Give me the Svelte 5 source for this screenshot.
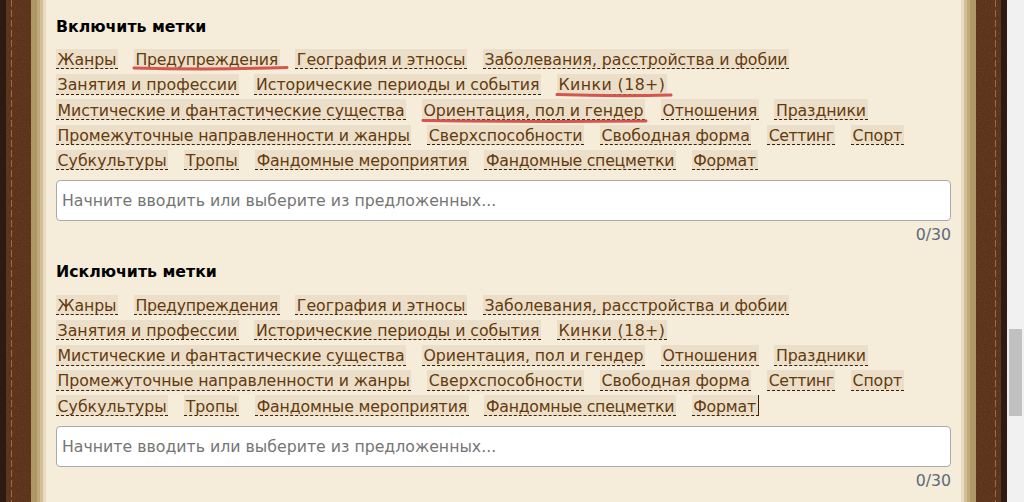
<script>
    const rows = [
        [["Жанры", -0.5], ["Предупреждения", -4], ["География и этносы", -0.5], ["Заболевания, расстройства и фобии", -1]],
        [["Занятия и профессии", 0], ["Исторические периоды и события", -1], ["Кинки (18+)", 5]],
        [["Мистические и фантастические существа", -4], ["Ориентация, пол и гендер", -1], ["Отношения", -1], ["Праздники", -1]],
        [["Промежуточные направленности и жанры", -4], ["Сверхспособности", 0], ["Свободная форма", -1], ["Сеттинг", -3], ["Спорт", -0.5]],
        [["Субкультуры", 0], ["Тропы", 0], ["Фандомные мероприятия", -3], ["Фандомные спецметки", -5], ["Формат", -1]]
    ];

    const sections = [
        { title: "Включить метки", caret: false },
        { title: "Исключить метки", caret: true }
    ];
</script>

{#snippet leather(side)}
    <svg class="leather" width="31" height="502" viewBox="0 0 31 502">
        <rect width="31" height="502" fill="#5a3119" />
        <rect width="31" height="502" filter="url(#grain-{side})" opacity="0.6" />
        {#if side === "left"}
            <rect width="6" height="502" fill="#2e1a10" />
            <line x1="11.5" y1="0" x2="11.5" y2="502" class="stitch" />
        {:else}
            <rect x="25" width="6" height="502" fill="#2e1a10" />
            <line x1="19.5" y1="0" x2="19.5" y2="502" class="stitch" />
        {/if}
        <filter id="grain-{side}">
            <feTurbulence type="fractalNoise" baseFrequency="0.7" numOctaves="2" seed="4" />
            <feColorMatrix values="0 0 0 0 0.16  0 0 0 0 0.07  0 0 0 0 0.03  0 0 0 1.6 -0.5" />
        </filter>
    </svg>
{/snippet}

<div class="frame">
    {@render leather("left")}
    <div class="trim"></div>
    <main class="paper">
        {#each sections as section}
            <section class="block">
                <h3>{section.title}</h3>
                <div class="tags">
                    {#each rows as row}
                        <div class="tag-row">
                            {#each row as [tag, tweak]}
                                <span
                                    class="tag"
                                    class:caret={section.caret && tag === "Формат"}
                                    style="letter-spacing: {tweak / tag.length}px"
                                >{tag}</span>
                            {/each}
                        </div>
                    {/each}
                </div>
                <input type="text" placeholder="Начните вводить или выберите из предложенных..." />
                <div class="counter">0/30</div>
            </section>
        {/each}
    </main>
    <div class="trim right"></div>
    {@render leather("right")}
    <div class="scrollbar"><div class="thumb"></div></div>

    <!-- red marks drawn by hand over the first block -->
    <svg class="marks" width="1024" height="502" viewBox="0 0 1024 502">
        <path d="M134 68 Q210 70 287 67.5" />
        <path d="M557 94.5 Q615 96.5 671 95" />
        <path d="M423 120.5 Q530 122 646 121" />
    </svg>
</div>

<style>
    :global(body) {
        margin: 0;
        overflow: hidden;
        background: #f1f1f1;
    }

    .frame {
        position: relative;
        display: flex;
        width: 1024px;
        height: 502px;
        overflow: hidden;
        font-family: "DejaVu Sans", sans-serif;
    }

    .leather {
        display: block;
        flex: none;
    }

    .stitch {
        stroke: #8f6f50;
        stroke-width: 1;
        stroke-dasharray: 7 3;
    }

    .trim {
        flex: none;
        width: 15px;
        background: linear-gradient(90deg, #ae9866 0 6px, #c0aa7c 6px 9px, #d2bf97 9px 12px, #e8dcc0 12px 15px);
    }

    .trim.right {
        background: linear-gradient(270deg, #ae9866 0 6px, #c0aa7c 6px 9px, #d2bf97 9px 12px, #e8dcc0 12px 15px);
    }

    .paper {
        flex: none;
        box-sizing: border-box;
        width: 915px;
        padding: 0 10px;
        background: #f5ecd9;
    }

    .block {
        height: 245.7px;
        padding-top: 17.6px;
        box-sizing: border-box;
    }

    h3 {
        margin: 0 0 13.4px;
        font-size: 15.75px;
        line-height: 18px;
        font-weight: bold;
        color: #000;
    }

    .tag-row {
        display: flex;
        align-items: flex-start;
        gap: 15.75px;
        height: 25.2px;
    }

    .tag {
        padding: 2.2px 1.6px 0;
        font-size: 15.75px;
        line-height: 17.3px;
        color: #633a0e;
        background: #ecdfc9;
        border-bottom: 1px dashed #3a2208;
    }

    .caret {
        border-right: 1px solid #3a2208;
    }

    input {
        display: block;
        box-sizing: border-box;
        width: 895px;
        height: 41px;
        margin-top: 5.2px;
        padding: 0 5px;
        border: 1px solid #aaa;
        border-radius: 4px;
        background: #fff;
        font: 15.75px "DejaVu Sans", sans-serif;
    }

    .counter {
        margin-top: 4px;
        font-size: 15.75px;
        line-height: 20px;
        text-align: right;
        color: #5b6b7b;
    }

    .scrollbar {
        flex: none;
        width: 17px;
        padding: 329px 2px 0;
        box-sizing: border-box;
        background: #f1f1f1;
    }

    .thumb {
        height: 87px;
        background: #c1c1c1;
    }

    .marks {
        position: absolute;
        top: 0;
        left: 0;
        pointer-events: none;
    }

    .marks path {
        fill: none;
        stroke: #d4574f;
        stroke-width: 3;
        stroke-linecap: round;
    }
</style>
